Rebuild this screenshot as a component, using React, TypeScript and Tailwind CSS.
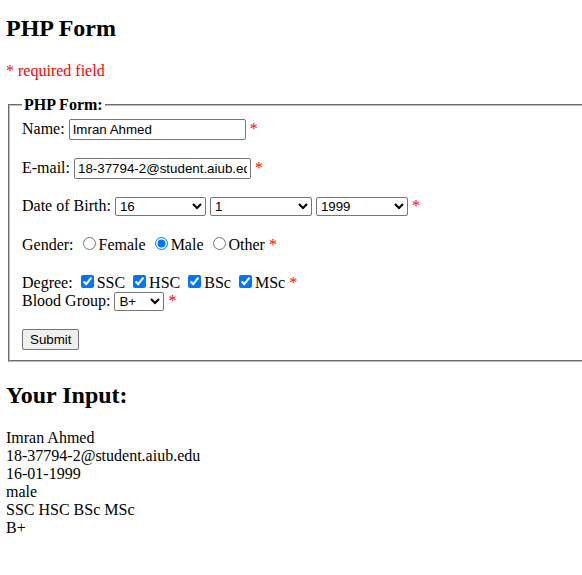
import React from "react";

const Star = () => <span className="text-[#ff0000]">*</span>;

export default function App() {
  const days = Array.from({ length: 31 }, (_, i) => String(i + 1));
  const months = Array.from({ length: 12 }, (_, i) => String(i + 1));
  const years = Array.from({ length: 50 }, (_, i) => String(1970 + i));
  const ctl =
    "font-['Liberation_Sans',Arial,sans-serif] text-[13.3333px] leading-[normal] text-black";
  return (
    <div className="w-[582px] min-h-[575px] overflow-hidden bg-white text-black font-['Liberation_Serif','Times_New_Roman',serif] text-[16px] leading-[normal] pt-[15px] px-[6px]">
      <h2 className="text-[24px] font-bold leading-[normal] mb-[20px]">PHP Form</h2>
      <p className="text-[#ff0000] mb-[16px]">* required field</p>
      <form>
        <fieldset className="mx-[2px] w-[620px] border-2 [border-style:groove] border-[#c0c0c0] pt-[5px] px-[12px] pb-[10px] min-w-0">
          <legend className="px-[2px] font-bold">PHP Form:</legend>
          Name:{" "}
          <input
            type="text"
            defaultValue="Imran Ahmed"
            className={`${ctl} w-[177px] border border-[#767676] rounded-[2px] px-[3px] py-[2px] bg-white`}
          />{" "}
          <Star />
          <br />
          <br />
          E-mail:{" "}
          <input
            type="text"
            defaultValue="18-37794-2@student.aiub.edu"
            className={`${ctl} w-[177px] border border-[#767676] rounded-[2px] px-[3px] py-[2px] bg-white`}
          />{" "}
          <Star />
          <br />
          <br />
          Date of Birth:{" "}
          <select
            defaultValue="16"
            className={`${ctl} w-[91px] border border-[#767676] rounded-[2px] bg-white`}
          >
            {days.map((d) => (
              <option key={d} value={d}>
                {d}
              </option>
            ))}
          </select>{" "}
          <select
            defaultValue="1"
            className={`${ctl} w-[102px] border border-[#767676] rounded-[2px] bg-white`}
          >
            {months.map((d) => (
              <option key={d} value={d}>
                {d}
              </option>
            ))}
          </select>{" "}
          <select
            defaultValue="1999"
            className={`${ctl} w-[92px] border border-[#767676] rounded-[2px] bg-white`}
          >
            {years.map((d) => (
              <option key={d} value={d}>
                {d}
              </option>
            ))}
          </select>{" "}
          <Star />
          <br />
          <br />
          Gender:{" "}
          <input type="radio" name="g" className="ml-[5px] mr-[3px] mt-[3px]" />
          Female{" "}
          <input type="radio" name="g" defaultChecked className="ml-[5px] mr-[3px] mt-[3px]" />
          Male{" "}
          <input type="radio" name="g" className="ml-[5px] mr-[3px] mt-[3px]" />
          Other <Star />
          <br />
          <br />
          Degree:{" "}
          <input type="checkbox" defaultChecked className="ml-[4px] mr-[3px] my-[3px]" />
          SSC{" "}
          <input type="checkbox" defaultChecked className="ml-[4px] mr-[3px] my-[3px]" />
          HSC{" "}
          <input type="checkbox" defaultChecked className="ml-[4px] mr-[3px] my-[3px]" />
          BSc{" "}
          <input type="checkbox" defaultChecked className="ml-[4px] mr-[3px] my-[3px]" />
          MSc <Star />
          <br />
          Blood Group:{" "}
          <select
            defaultValue="B+"
            className={`${ctl} w-[50px] border border-[#767676] rounded-[2px] bg-white`}
          >
            {["A+", "A-", "B+", "B-", "O+", "O-", "AB+", "AB-"].map((d) => (
              <option key={d} value={d}>
                {d}
              </option>
            ))}
          </select>{" "}
          <Star />
          <br />
          <br />
          <button
            type="button"
            className={`${ctl} border border-[#767676] rounded-[2px] bg-[#efefef] px-[7px] py-[2px]`}
          >
            Submit
          </button>
        </fieldset>
      </form>
      <h2 className="text-[24px] font-bold leading-[normal] mt-[20px] mb-[20px]">Your Input:</h2>
      <div>
        Imran Ahmed
        <br />
        18-37794-2@student.aiub.edu
        <br />
        16-01-1999
        <br />
        male
        <br />
        SSC HSC BSc MSc
        <br />
        B+
      </div>
    </div>
  );
}
